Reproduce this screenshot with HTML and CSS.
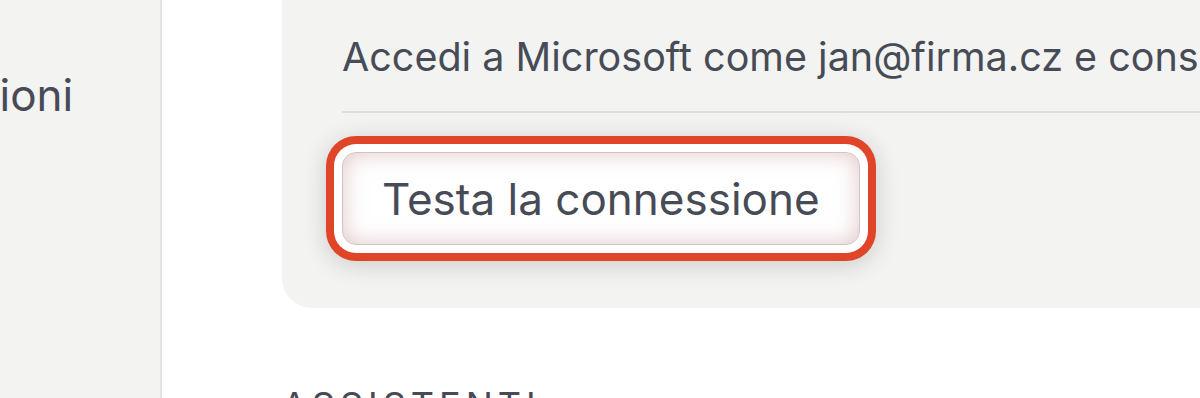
FILE: index.html
```html
<!DOCTYPE html>
<html>
  <head>
    <meta charset="UTF-8" />
    <title>Impostazioni</title>
    <link rel="stylesheet" href="styles.css">
  </head>
  <body>
    <div class="app">
      <div class="sidebar">
        <div class="nav-item">Impostazioni</div>
      </div>
      <div class="main">
        <div class="card">
          <div class="card-text">
            Accedi a Microsoft come jan@firma.cz e consenti l'accesso a calendario e posta.
          </div>
          <div class="card-actions">
            <button class="button highlighted">Testa la connessione</button>
          </div>
        </div>
        <div class="section-title">Assistenti</div>
      </div>
    </div>
  </body>
</html>
```

FILE: styles.css
```css
* {
  box-sizing: border-box;
  font-family: Inter, "Noto Sans", sans-serif;
}

html,
body {
  margin: 0;
  height: 100%;
  overflow: hidden;
  background: #ffffff;
}

.app {
  display: flex;
  height: 398px;
  color: #464b56;
}

.sidebar {
  width: 162px;
  flex-shrink: 0;
  background: #f3f3f1;
  border-right: 2px solid #e3e3e1;
  overflow: hidden;
}

.nav-item {
  font-size: 44px;
  white-space: nowrap;
  margin-top: 68px;
  margin-left: -191px;
}

.main {
  flex: 1;
  padding-left: 120px;
  overflow: hidden;
}

.card {
  width: 1400px;
  background: #f3f3f1;
  border-radius: 0 0 30px 30px;
  padding: 0 60px 63px;
}

.card-text {
  font-size: 39.5px;
  white-space: nowrap;
  padding: 33px 0 30px;
  border-bottom: 2px solid #dddddb;
}

.card-actions {
  padding-top: 39px;
}

.button {
  height: 93px;
  padding: 0 39px;
  font-size: 44px;
  color: #464b56;
  background: #ffffff;
  border: 1px solid #d5c3c3;
  border-radius: 14px;
  cursor: pointer;
}

.button.highlighted {
  box-shadow:
    inset 0 0 22px rgba(200, 150, 150, 0.55),
    0 0 0 8px #ffffff,
    0 0 0 16px #e04529,
    0 4px 24px 16px rgba(0, 0, 0, 0.16);
}

.section-title {
  margin-top: 75px;
  font-size: 36px;
  letter-spacing: 5px;
  text-transform: uppercase;
  color: #464b56;
}
```
